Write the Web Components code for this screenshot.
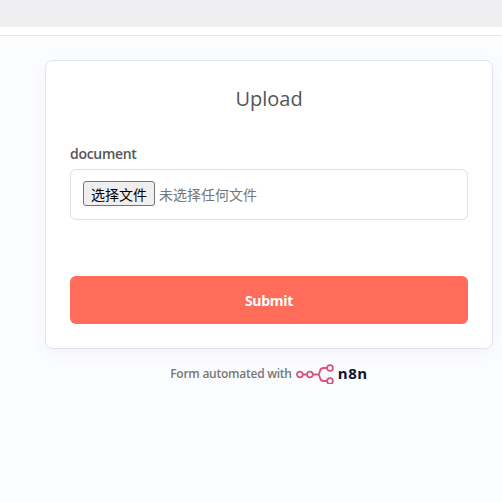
<!DOCTYPE html>
<html>
<head>
<meta charset="utf-8">
<style>
    html, body { margin: 0; padding: 0; height: 100%; overflow: hidden; }
    body { font-family: "Open Sans", sans-serif; background: #fbfcfe; }
</style>
</head>
<body>
<top-strip></top-strip>
<form-page>
    <form-card>
        <span slot="title">Upload</span>
        <file-field label="document"></file-field>
        <submit-button slot="action">Submit</submit-button>
    </form-card>
    <n8n-footer></n8n-footer>
</form-page>

<script>
class TopStrip extends HTMLElement {
    constructor() {
        super();
        this.attachShadow({ mode: 'open' });
        this.shadowRoot.innerHTML = `
            <style>
                :host { display: block; height: 36px; background: #fff; box-sizing: border-box; border-bottom: 1px solid #e6e6e9; }
                #bar { height: 27px; background: #efeff1; }
            </style>
            <div id="bar"></div>
        `;
    }
}

class FormPage extends HTMLElement {
    constructor() {
        super();
        this.attachShadow({ mode: 'open' });
        this.shadowRoot.innerHTML = `
            <style>
                :host { display: flex; flex-direction: column; padding: 24px 9px 0 45px; }
            </style>
            <slot></slot>
        `;
    }
}

class FormCard extends HTMLElement {
    constructor() {
        super();
        this.attachShadow({ mode: 'open' });
        this.shadowRoot.innerHTML = `
            <style>
                :host {
                    display: flex;
                    flex-direction: column;
                    box-sizing: border-box;
                    height: 289px;
                    padding: 23px 24px 24px 24px;
                    background: #fff;
                    border: 1px solid #dfe3ec;
                    border-radius: 8px;
                    box-shadow: 0 4px 16px rgba(99, 77, 255, 0.05);
                }
                #title {
                    height: 30px;
                    line-height: 30px;
                    text-align: center;
                    font-size: 20px;
                    color: #555;
                    margin-bottom: 30px;
                }
                #action { margin-top: 56px; }
            </style>
            <div id="title"><slot name="title"></slot></div>
            <slot></slot>
            <div id="action"><slot name="action"></slot></div>
        `;
    }
}

class FileField extends HTMLElement {
    constructor() {
        super();
        this.attachShadow({ mode: 'open' });
        this.shadowRoot.innerHTML = `
            <style>
                :host { display: block; }
                label {
                    display: block;
                    height: 20px;
                    line-height: 20px;
                    margin-bottom: 5px;
                    font-size: 14px;
                    font-weight: 600;
                    letter-spacing: -0.3px;
                    color: #555;
                }
                #box {
                    display: flex;
                    align-items: center;
                    gap: 4px;
                    box-sizing: border-box;
                    height: 51px;
                    padding: 0 12px 2px;
                    border: 1px solid #dbdfe7;
                    border-radius: 6px;
                    background: #fff;
                    font-family: "Noto Sans CJK SC", sans-serif;
                    font-size: 14px;
                    color: #777;
                }
                button {
                    box-sizing: border-box;
                    width: 72px;
                    height: 25px;
                    padding: 0;
                    border: 1px solid #767676;
                    border-radius: 3px;
                    background: #efefef;
                    color: #000;
                    font: inherit;
                    line-height: 1;
                }
            </style>
            <label></label>
            <div id="box">
                <button type="button">选择文件</button>
                <span>未选择任何文件</span>
            </div>
        `;
        this.shadowRoot.querySelector("label").textContent = this.getAttribute("label");
    }
}

class SubmitButton extends HTMLElement {
    constructor() {
        super();
        this.attachShadow({ mode: 'open' });
        this.shadowRoot.innerHTML = `
            <style>
                :host {
                    display: flex;
                    align-items: center;
                    justify-content: center;
                    height: 48px;
                    border-radius: 6px;
                    background: #ff6d5a;
                    color: #fff;
                    font-size: 14px;
                    font-weight: 700;
                    letter-spacing: -0.3px;
                }
            </style>
            <slot></slot>
        `;
    }
}

class N8nFooter extends HTMLElement {
    constructor() {
        super();
        this.attachShadow({ mode: 'open' });
        this.shadowRoot.innerHTML = `
            <style>
                :host {
                    display: flex;
                    align-items: center;
                    justify-content: center;
                    gap: 4px;
                    height: 26px;
                    margin-top: 11px;
                    font-size: 12px;
                    color: #777;
                }
                span { font-weight: 600; letter-spacing: -0.25px; }
                svg { display: block; margin: 0 -1px 0 0; }
                b { font-size: 15px; font-weight: 700; color: #101330; letter-spacing: 0.6px; }
            </style>
            <span>Form automated with</span>
            <svg width="39" height="22" viewBox="0 -1 39 22" fill="none" stroke="#d6547f" stroke-width="1.8">
                <circle cx="3.9" cy="11.5" r="2.9"/>
                <circle cx="13.9" cy="11.5" r="2.9"/>
                <circle cx="34" cy="5" r="2.9"/>
                <circle cx="34" cy="18" r="2.9"/>
                <path d="M6.8 11.5H11M16.8 11.5H22.5M31.1 5H27.5C25 5 24.2 6.6 23.8 8.5C23.3 10.6 22.6 11.5 22.5 11.5C22.6 11.5 23.3 12.4 23.8 14.5C24.2 16.4 25 18 27.5 18H31.1"/>
            </svg>
            <b>n8n</b>
        `;
    }
}

customElements.define('top-strip', TopStrip);
customElements.define('form-page', FormPage);
customElements.define('form-card', FormCard);
customElements.define('file-field', FileField);
customElements.define('submit-button', SubmitButton);
customElements.define('n8n-footer', N8nFooter);
</script>
</body>
</html>
